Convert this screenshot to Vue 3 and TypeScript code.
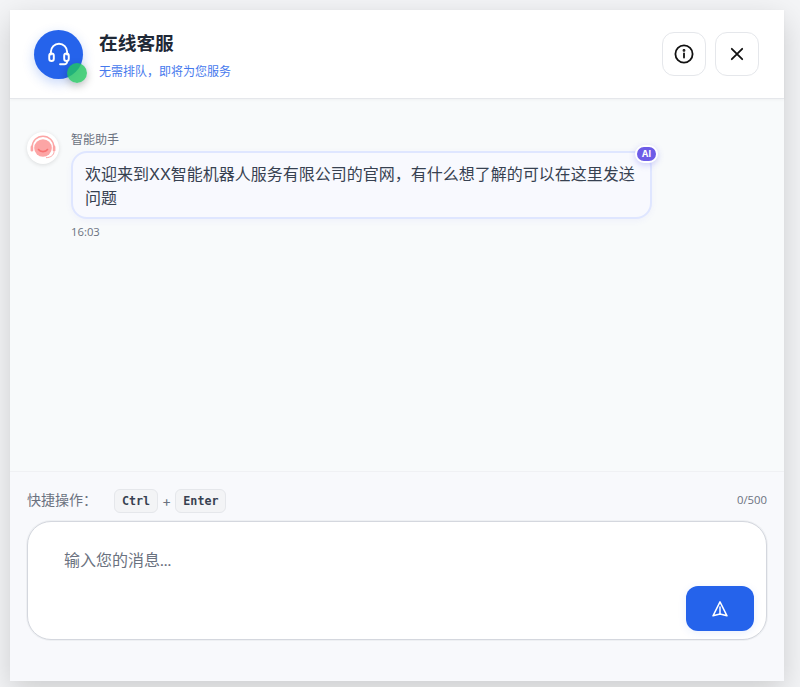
<script setup lang="ts">
import { ref } from 'vue'

const draft = ref('')
</script>

<template>
  <div class="page">
    <main class="card">
      <header class="head">
        <div class="avatar">
          <svg width="26" height="26" viewBox="0 0 24 24" fill="none" stroke="#fff" stroke-width="1.800" stroke-linecap="round" stroke-linejoin="round">
            <path d="M4.500 12.500V10a7.500 7.500 0 0 1 15 0v2.500" />
            <rect x="3" y="11.500" width="4.200" height="7" rx="2.100" />
            <rect x="16.800" y="11.500" width="4.200" height="7" rx="2.100" />
            <path d="M19.500 18.500v.5a2.500 2.500 0 0 1-2.500 2.500h-4" />
          </svg>
          <span class="dot"></span>
        </div>
        <div class="title">
          <h1>在线客服</h1>
          <p>无需排队，即将为您服务</p>
        </div>
        <div class="actions">
          <button class="icon-btn">
            <svg width="20" height="20" viewBox="0 0 20 20" fill="none" stroke="#111" stroke-width="1.800" stroke-linecap="round">
              <circle cx="10" cy="10" r="8.600" />
              <path d="M10 9.400v4.200" />
              <circle cx="10" cy="6.400" r="0.500" fill="#111" />
            </svg>
          </button>
          <button class="icon-btn">
            <svg width="20" height="20" viewBox="0 0 20 20" fill="none" stroke="#111" stroke-width="1.800" stroke-linecap="round">
              <path d="M4.800 4.800l10.400 10.400M15.200 4.800L4.800 15.200" />
            </svg>
          </button>
        </div>
      </header>

      <section class="messages">
        <div class="msg">
          <div class="bot">
            <svg width="32" height="32" viewBox="0 0 32 32" fill="none">
              <circle cx="16" cy="16" r="8.800" fill="#fca5a5" />
              <path d="M5.200 15a10.800 10.800 0 0 1 21.600 0" stroke="#fca5a5" stroke-width="1.400" />
              <rect x="3.600" y="13.600" width="2.600" height="6" rx="1.300" fill="#fca5a5" />
              <rect x="25.800" y="13.600" width="2.600" height="6" rx="1.300" fill="#fca5a5" />
              <path d="M27 19.500c0 3.500-3 6-8 6.200" stroke="#fca5a5" stroke-width="1" />
              <path d="M11.500 17.500c1.800 2.800 7.200 2.800 9 0" stroke="#f87171" stroke-width="1.600" stroke-linecap="round" />
            </svg>
          </div>
          <div class="msg-body">
            <span class="name">智能助手</span>
            <div class="bubble">
              欢迎来到XX智能机器人服务有限公司的官网，有什么想了解的可以在这里发送问题
              <span class="ai">AI</span>
            </div>
            <span class="time">16:03</span>
          </div>
        </div>
      </section>

      <footer class="foot">
        <div class="hints">
          <span class="hint-label">快捷操作：</span>
          <kbd>Ctrl</kbd>
          <span class="plus">+</span>
          <kbd>Enter</kbd>
          <span class="count">0/500</span>
        </div>
        <div class="composer">
          <textarea v-model="draft" placeholder="输入您的消息..."></textarea>
          <button class="send">
            <svg width="20" height="20" viewBox="0 0 20 20" fill="none" stroke="#fff" stroke-width="1.500" stroke-linejoin="round" stroke-linecap="round">
              <path d="M10 2.800L17 16.800 10 15 3 16.800Z" />
              <path d="M10 8v7" />
            </svg>
          </button>
        </div>
      </footer>
    </main>
  </div>
</template>

<style>
body {
  background: #f4f5f7;
}
</style>

<style scoped>
.page {
  box-sizing: border-box;
  height: 687px;
  overflow: hidden;
  padding: 10px 16px 6px 10px;
  background: #f4f5f7;
  font-family: Inter, "Noto Sans CJK SC", sans-serif;
}

.card {
  display: flex;
  flex-direction: column;
  height: 671px;
  background: #f8fafb;
  box-shadow: 0 10px 30px rgba(0, 0, 0, 0.17);
}

.head {
  display: flex;
  align-items: center;
  gap: 16px;
  flex: none;
  height: 89px;
  box-sizing: border-box;
  padding: 0 25px 0 24px;
  background: #fff;
  border-bottom: 1px solid #e5e7eb;
  box-shadow: 0 1px 3px rgba(0, 0, 0, 0.04);
}

.avatar {
  position: relative;
  display: flex;
  align-items: center;
  justify-content: center;
  width: 49px;
  height: 49px;
  border-radius: 50%;
  background: #2563eb;
  box-shadow: 0 4px 12px rgba(37, 99, 235, 0.25);
}

.dot {
  position: absolute;
  right: -4px;
  bottom: -4px;
  width: 20px;
  height: 20px;
  border-radius: 50%;
  background: rgba(34, 197, 94, 0.8);
  box-shadow: 0 3px 8px rgba(0, 0, 0, 0.25);
}

.title {
  flex: 1;
  padding-top: 2px;
}

.title h1 {
  margin: 0;
  font-size: 18.720px;
  line-height: 26px;
  font-weight: 700;
  color: #1f2937;
}

.title p {
  margin: 7px 0 0;
  font-size: 12px;
  line-height: 16px;
  color: #2563eb;
  opacity: 0.85;
}

.actions {
  display: flex;
  gap: 9px;
}

.icon-btn {
  display: flex;
  align-items: center;
  justify-content: center;
  width: 44px;
  height: 44px;
  padding: 0;
  border: 1px solid #e5e7eb;
  border-radius: 12px;
  background: #fff;
}

.messages {
  flex: 1;
  padding: 31px 17px 0;
  min-height: 0;
}

.msg {
  display: flex;
  gap: 12px;
}

.bot {
  flex: none;
  width: 32px;
  height: 32px;
  margin-top: 2px;
  border-radius: 50%;
  background: #fff;
  box-shadow: 0 1px 4px rgba(0, 0, 0, 0.12);
}

.msg-body {
  display: flex;
  flex-direction: column;
  align-items: flex-start;
}

.name {
  font-size: 12px;
  line-height: 16px;
  margin-top: 2px;
  color: #6b7280;
}

.bubble {
  position: relative;
  box-sizing: border-box;
  width: 581px;
  margin-top: 3px;
  padding: 9px 12px 7px;
  font-size: 16px;
  line-height: 24px;
  color: #374151;
  background: #f8f9fe;
  border: 2px solid #dfe6ff;
  border-radius: 16px;
  box-shadow: 0 2px 6px rgba(99, 102, 241, 0.06);
}

.ai {
  position: absolute;
  top: -8px;
  right: -8px;
  padding: 0 5px;
  font-size: 9px;
  line-height: 14px;
  font-weight: 700;
  color: #fff;
  background: #6d5ce7;
  border: 2px solid #fff;
  border-radius: 10px;
  box-shadow: 0 2px 6px rgba(99, 102, 241, 0.3);
}

.time {
  margin-top: 5px;
  font-family: "Open Sans", sans-serif;
  font-size: 11.300px;
  line-height: 16px;
  color: #6b7280;
}

.foot {
  flex: none;
  height: 210px;
  box-sizing: border-box;
  padding: 16px 17px 0;
  background: #f8f9fc;
  border-top: 1px solid #f0f1f4;
}

.hints {
  display: flex;
  align-items: center;
  height: 26px;
  font-size: 14px;
  color: #6b7280;
}

.hint-label {
  width: 87px;
  margin-bottom: 4px;
}

kbd {
  padding: 0 7px;
  height: 24px;
  box-sizing: border-box;
  font-family: "DejaVu Sans Mono", monospace;
  font-size: 11.670px;
  font-weight: 700;
  line-height: 22px;
  color: #374151;
  background: #f3f4f6;
  border: 1px solid #e5e7eb;
  border-radius: 6px;
}

.plus {
  margin: 0 4px 2px;
  font-size: 14px;
}

.count {
  margin-left: auto;
  margin-bottom: 4px;
  font-family: "Open Sans", sans-serif;
  font-size: 11.300px;
  color: #6b7280;
}

.composer {
  position: relative;
  box-sizing: border-box;
  height: 119px;
  margin-top: 7px;
  background: #fff;
  border: 1px solid #d4d7de;
  border-radius: 24px;
  box-shadow: 0 0 0 1px #eef0f3;
}

textarea {
  display: block;
  box-sizing: border-box;
  width: 100%;
  height: 100%;
  padding: 26px 120px 16px 36px;
  font-family: Lato, "Noto Sans CJK SC", sans-serif;
  font-size: 16px;
  line-height: 24px;
  color: #374151;
  background: transparent;
  border: 0;
  outline: 0;
  resize: none;
}

textarea::placeholder {
  color: #6b7280;
}

.send {
  position: absolute;
  right: 12px;
  bottom: 8px;
  display: flex;
  align-items: center;
  justify-content: center;
  width: 68px;
  height: 45px;
  padding: 0;
  border: 0;
  border-radius: 12px;
  background: #2563eb;
  box-shadow: 0 2px 8px rgba(37, 99, 235, 0.1);
}
</style>
